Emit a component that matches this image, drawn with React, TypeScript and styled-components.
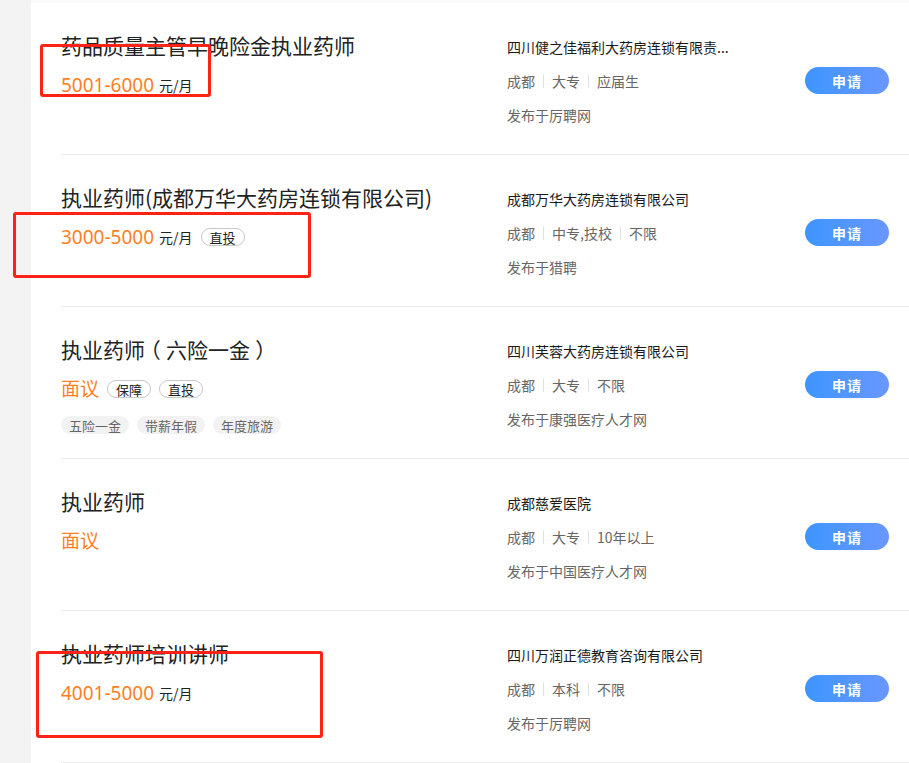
import React from "react";
import styled, { createGlobalStyle } from "styled-components";

const GlobalStyle = createGlobalStyle`
  html, body {
    margin: 0;
    padding: 0;
    background: #f3f3f3;
    font-family: "Noto Sans", "Noto Sans CJK SC", sans-serif;
    color: #222;
  }
  * { box-sizing: border-box; }
`;

const Page = styled.div`
  position: relative;
  width: 909px;
  height: 763px;
  overflow: hidden;
  padding-left: 31px;
  background: #f3f3f3;
`;

const TopBand = styled.div`
  height: 3px;
  background: #fafafa;
`;

const Panel = styled.div`
  background: #fff;
  padding-left: 30px;
  min-height: 760px;
`;

const Row = styled.div`
  display: flex;
  height: 152px;
  border-bottom: 1px solid #ececec;
  padding-top: 28px;
`;

const LeftCol = styled.div`
  width: 446px;
  flex-shrink: 0;
`;

const Title = styled.div`
  font-family: "Noto Sans CJK SC", sans-serif;
  font-size: 21px;
  line-height: 28px;
  color: #222;
  white-space: nowrap;
`;

const Punct = styled.span`
  font-feature-settings: "halt" 1;
  padding: 0 0.25em;
`;

const SalaryLine = styled.div`
  display: flex;
  align-items: center;
  height: 28px;
  margin-top: 12px;
`;

const Salary = styled.span`
  font-family: "Noto Sans", "Noto Sans CJK SC", sans-serif;
  font-size: 19px;
  color: #ff7f24;
  line-height: 28px;
`;

const Unit = styled.span`
  font-family: "Noto Sans CJK SC", sans-serif;
  font-size: 14px;
  color: #222;
  margin-left: 5px;
  line-height: 28px;
`;

const Badge = styled.span`
  display: inline-flex;
  align-items: center;
  justify-content: center;
  height: 18px;
  padding: 0 8px;
  margin-left: 8px;
  border: 1px solid #c8c8c8;
  border-radius: 9px;
  font-family: "Noto Sans CJK SC", sans-serif;
  font-size: 13px;
  color: #222;
  & + & { margin-left: 8px; }
`;

const Tags = styled.div`
  display: flex;
  gap: 8px;
  margin-top: 13px;
`;

const Tag = styled.span`
  display: inline-flex;
  align-items: center;
  height: 18px;
  padding: 0 8px;
  border-radius: 9px;
  background: #f2f2f2;
  font-family: "Noto Sans CJK SC", sans-serif;
  font-size: 13px;
  color: #666;
`;

const RightCol = styled.div`
  flex: 1;
  display: flex;
  align-items: flex-start;
  justify-content: space-between;
  padding-right: 20px;
`;

const Info = styled.div`
  padding-top: 6px;
  display: flex;
  flex-direction: column;
  gap: 14px;
`;

const Company = styled.div`
  font-family: "Noto Sans CJK SC", sans-serif;
  font-size: 14px;
  line-height: 20px;
  color: #1a1a1a;
  white-space: nowrap;
`;

const Meta = styled.div`
  display: flex;
  align-items: center;
  font-family: "Noto Sans CJK SC", sans-serif;
  font-size: 14px;
  line-height: 20px;
  color: #666;
`;

const Sep = styled.span`
  display: inline-block;
  width: 1px;
  height: 13px;
  background: #e0e0e0;
  margin: 0 8px;
`;

const Source = styled.div`
  font-family: "Noto Sans CJK SC", sans-serif;
  font-size: 14px;
  line-height: 20px;
  color: #666;
`;

const ApplyButton = styled.button`
  margin-top: 36px;
  width: 84px;
  height: 27px;
  border: none;
  border-radius: 14px;
  background: linear-gradient(90deg, #3d95fe 0%, #6a97fe 100%);
  color: #fff;
  font-family: "Noto Sans CJK SC", sans-serif;
  font-weight: 700;
  font-size: 14px;
  letter-spacing: 1px;
  cursor: pointer;
  padding: 0;
`;

const Mark = styled.div<{ $x: number; $y: number; $w: number; $h: number }>`
  position: absolute;
  left: ${(p) => p.$x}px;
  top: ${(p) => p.$y}px;
  width: ${(p) => p.$w}px;
  height: ${(p) => p.$h}px;
  border: 3px solid #ff2216;
  border-radius: 3px;
  pointer-events: none;
`;

type Job = {
  title: React.ReactNode;
  salary: string;
  unit?: string;
  badges?: string[];
  tags?: string[];
  company: string;
  meta: string[];
  source: string;
};

const jobs: Job[] = [
  {
    title: "药品质量主管早晚险金执业药师",
    salary: "5001-6000",
    unit: "元/月",
    company: "四川健之佳福利大药房连锁有限责...",
    meta: ["成都", "大专", "应届生"],
    source: "发布于厉聘网",
  },
  {
    title: "执业药师(成都万华大药房连锁有限公司)",
    salary: "3000-5000",
    unit: "元/月",
    badges: ["直投"],
    company: "成都万华大药房连锁有限公司",
    meta: ["成都", "中专,技校", "不限"],
    source: "发布于猎聘",
  },
  {
    title: (
      <>
        执业药师<Punct>（</Punct>六险一金<Punct>）</Punct>
      </>
    ),
    salary: "面议",
    badges: ["保障", "直投"],
    tags: ["五险一金", "带薪年假", "年度旅游"],
    company: "四川芙蓉大药房连锁有限公司",
    meta: ["成都", "大专", "不限"],
    source: "发布于康强医疗人才网",
  },
  {
    title: "执业药师",
    salary: "面议",
    company: "成都慈爱医院",
    meta: ["成都", "大专", "10年以上"],
    source: "发布于中国医疗人才网",
  },
  {
    title: "执业药师培训讲师",
    salary: "4001-5000",
    unit: "元/月",
    company: "四川万润正德教育咨询有限公司",
    meta: ["成都", "本科", "不限"],
    source: "发布于厉聘网",
  },
];

export default function App() {
  return (
    <>
      <GlobalStyle />
      <Page>
        <TopBand />
        <Panel>
          {jobs.map((job, i) => (
            <Row key={i}>
              <LeftCol>
                <Title>{job.title}</Title>
                <SalaryLine>
                  <Salary>{job.salary}</Salary>
                  {job.unit && <Unit>{job.unit}</Unit>}
                  {job.badges?.map((b) => (
                    <Badge key={b}>{b}</Badge>
                  ))}
                </SalaryLine>
                {job.tags && (
                  <Tags>
                    {job.tags.map((t) => (
                      <Tag key={t}>{t}</Tag>
                    ))}
                  </Tags>
                )}
              </LeftCol>
              <RightCol>
                <Info>
                  <Company>{job.company}</Company>
                  <Meta>
                    {job.meta.map((m, j) => (
                      <React.Fragment key={j}>
                        {j > 0 && <Sep />}
                        <span>{m}</span>
                      </React.Fragment>
                    ))}
                  </Meta>
                  <Source>{job.source}</Source>
                </Info>
                <ApplyButton>申请</ApplyButton>
              </RightCol>
            </Row>
          ))}
        </Panel>
        <Mark $x={40} $y={44} $w={171} $h={53} />
        <Mark $x={13} $y={212} $w={298} $h={66} />
        <Mark $x={36} $y={651} $w={287} $h={87} />
      </Page>
    </>
  );
}
